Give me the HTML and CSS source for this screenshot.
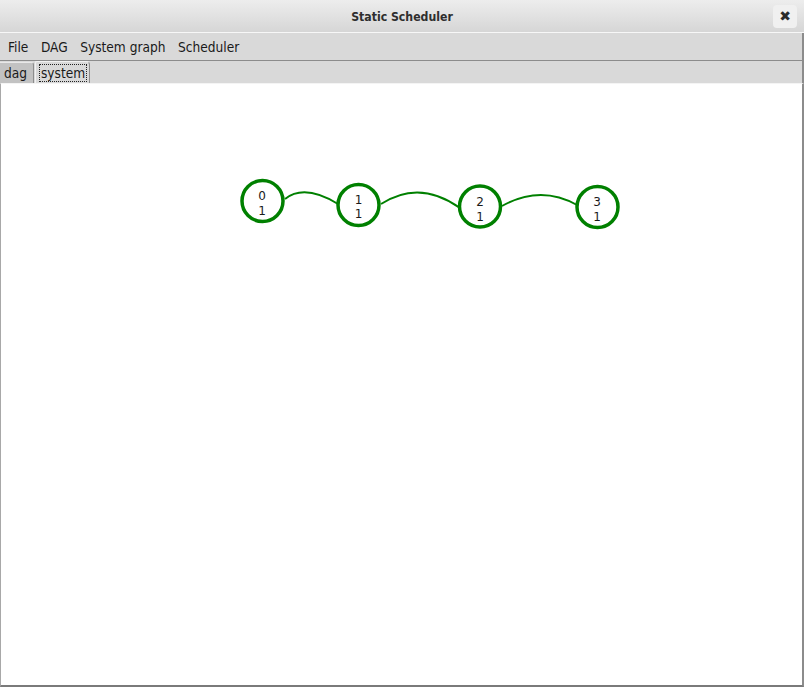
FILE: index.html
```html
<!DOCTYPE html>
<html>
<head>
<meta charset="utf-8">
<title>Static Scheduler</title>
<link rel="stylesheet" href="styles.css">
</head>
<body>
<div class="window">
  <header class="titlebar">
    <span class="title">Static Scheduler</span>
    <button class="close">✖</button>
  </header>
  <nav class="menubar">
    <span class="menu-item">File</span>
    <span class="menu-item">DAG</span>
    <span class="menu-item">System graph</span>
    <span class="menu-item">Scheduler</span>
  </nav>
  <div class="tabbar">
    <div class="tab tab-dag">dag</div>
    <div class="tab tab-system"><span class="focus">system</span></div>
  </div>
  <main class="content">
    <svg class="graph" width="800" height="600" viewBox="1 84 800 600">
      <g fill="none" stroke="#008000" stroke-width="2">
        <path d="M285 199 Q304.5 183.5 338 204"/>
        <path d="M381 204 Q419.5 179 460 208"/>
        <path d="M502 206 Q540.5 184.5 577 205"/>
      </g>
      <g fill="none" stroke="#008000" stroke-width="3.5">
        <circle cx="262.5" cy="201" r="20.5"/>
        <circle cx="358.5" cy="205" r="20.5"/>
        <circle cx="480" cy="206.5" r="20.5"/>
        <circle cx="597.5" cy="207" r="20.5"/>
      </g>
      <g class="labels" text-anchor="middle">
        <text x="262" y="199.5">0</text><text x="262" y="214.5">1</text>
        <text x="358.5" y="203.5">1</text><text x="358.5" y="218">1</text>
        <text x="480" y="206">2</text><text x="480" y="220.5">1</text>
        <text x="597" y="206">3</text><text x="597" y="220.5">1</text>
      </g>
    </svg>
  </main>
</div>
</body>
</html>
```
FILE: styles.css
```css
html, body {
  margin: 0;
  padding: 0;
  background: #d9d9d9;
}
body {
  width: 804px;
  height: 687px;
  overflow: hidden;
  font-family: "DejaVu Sans Condensed", "DejaVu Sans", sans-serif;
  font-stretch: condensed;
}
.window {
  display: flex;
  flex-direction: column;
  width: 804px;
  height: 687px;
}
.titlebar {
  position: relative;
  height: 32px;
  flex: none;
  display: flex;
  align-items: center;
  justify-content: center;
  background: linear-gradient(#ededed, #d6d6d6);
  border-bottom: 1px solid #f7f7f7;
}
.title {
  font-weight: bold;
  font-size: 12.2px;
  color: #2e2e2e;
  padding-top: 1px;
}
.close {
  position: absolute;
  right: 7px;
  top: 5px;
  width: 24px;
  height: 23px;
  border: none;
  border-radius: 4px;
  background: #f0f0f0;
  color: #2a2a2a;
  font-size: 14px;
  line-height: 23px;
  padding: 0;
  font-family: "DejaVu Sans", sans-serif;
}
.menubar {
  height: 27px;
  flex: none;
  display: flex;
  align-items: center;
  gap: 12.5px;
  padding-left: 8px;
  background: #d9d9d9;
  border-bottom: 1px solid #8c8c8c;
  border-right: 2px solid #8c8c8c;
  font-size: 13.6px;
  color: #1a1a1a;
}
.tabbar {
  height: 22px;
  flex: none;
  display: flex;
  align-items: flex-end;
  background: #d9d9d9;
  border-right: 2px solid #8c8c8c;
}
.tab {
  height: 21px;
  box-sizing: border-box;
  font-size: 13.6px;
  color: #1a1a1a;
  display: flex;
  align-items: center;
}
.tab-dag {
  width: 34px;
  padding-left: 4px;
  background: #c2c2c2;
  border-top: 1px solid #e8e8e8;
  border-right: 1px solid #8c8c8c;
  border-radius: 0 3px 0 0;
  margin-top: 1px;
}
.tab-system {
  margin-left: 1px;
  width: 55px;
  height: 22px;
  padding-left: 4px;
  background: #d9d9d9;
  border-top: 1px solid #f2f2f2;
  border-left: 1px solid #f2f2f2;
  border-right: 1px solid #8c8c8c;
  border-radius: 2px 4px 0 0;
}
.focus {
  outline: 1px dotted #222;
  outline-offset: 0;
  line-height: 16px;
  padding: 0 1px;
}
.content {
  flex: 1;
  background: #fff;
  border-top: 1px solid #f4f4f4;
  border-left: 1px solid #a8a8a8;
  border-right: 2px solid #8c8c8c;
  border-bottom: 2px solid #7a7a7a;
  overflow: hidden;
}
.graph {
  display: block;
}
.labels text {
  font-family: "DejaVu Sans", sans-serif;
  font-stretch: normal;
  font-size: 12px;
  fill: #1a1a1a;
}
```
